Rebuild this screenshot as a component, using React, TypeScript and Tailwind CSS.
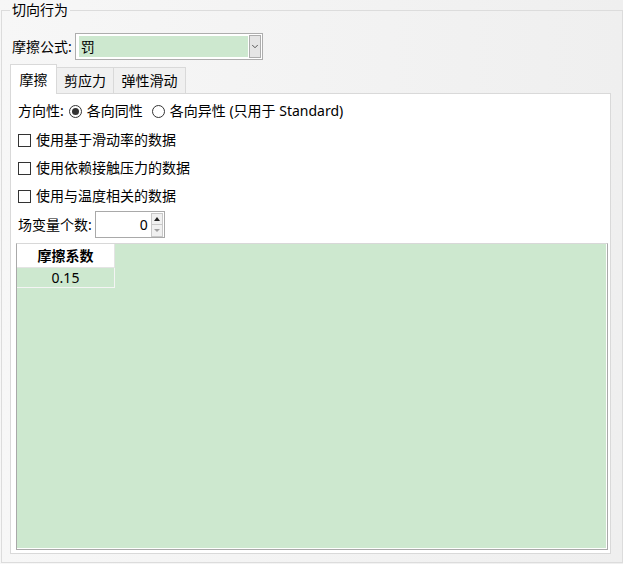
import { ChevronDown } from 'lucide-react'

const FONT = { fontFamily: '"Noto Sans", "Noto Sans CJK SC", sans-serif' }

function Radio({ checked, label }: { checked?: boolean; label: string }) {
  return (
    <label className="flex items-center gap-[5px]">
      <span className="flex h-[13px] w-[13px] items-center justify-center rounded-full border border-[#333333] bg-white">
        {checked && <span className="h-[7px] w-[7px] rounded-full bg-[#333333]" />}
      </span>
      <span>{label}</span>
    </label>
  )
}

function Check({ label }: { label: string }) {
  return (
    <div className="flex h-[28px] items-center gap-[5px]">
      <span className="h-[13px] w-[13px] border border-[#333333] bg-white" />
      <span>{label}</span>
    </div>
  )
}

export default function App() {
  return (
    <div
      className="h-[564px] w-[623px] overflow-hidden bg-gradient-to-r from-[#f7f7f7] to-[#efefef] text-[14px] leading-[20px] text-black"
      style={FONT}
    >
      <fieldset className="ml-[1px] h-[563px] w-[622px] border border-[#dcdcdc]">
        <legend className="ml-[8px] px-[2px] leading-[20px]">切向行为</legend>

        {/* Formula row */}
        <div className="mt-[13px] flex h-[27px] items-center pl-[10px]">
          <span>摩擦公式:</span>
          <div className="ml-[3px] flex h-[27px] w-[188px] items-center border border-[#adadad] bg-white p-[1px]">
            <div className="ml-[2px] flex h-[21px] w-[169px] items-center bg-[#cde8cf] pl-[2px]">罚</div>
            <div className="ml-[1px] flex h-[23px] w-[12px] items-center justify-center border border-[#adadad] bg-[#e5e5e5]">
              <ChevronDown className="h-[11px] w-[11px] text-[#222222]" strokeWidth={1.75} />
            </div>
          </div>
        </div>

        {/* Tabs */}
        <div className="ml-[8px] mt-[4px] flex items-end">
          <div className="relative z-10 -mb-[1px] flex h-[30px] w-[47px] items-center justify-center border border-b-0 border-[#d9d9d9] bg-white">
            摩擦
          </div>
          <div className="flex h-[26px] w-[57px] items-center justify-center border-r border-t border-[#d9d9d9] bg-[#f0f0f0]">
            剪应力
          </div>
          <div className="flex h-[26px] w-[72px] items-center justify-center border-r border-t border-[#d9d9d9] bg-[#f0f0f0]">
            弹性滑动
          </div>
        </div>

        {/* Panel */}
        <div className="ml-[8px] h-[461px] w-[601px] border border-[#d9d9d9] bg-white pl-[7px] pt-[7px]">
          <div className="flex h-[20px] items-center">
            <span className="mr-[5px]">方向性:</span>
            <Radio checked label="各向同性" />
            <span className="w-[9px]" />
            <Radio label="各向异性 (只用于 Standard)" />
          </div>
          <div className="mt-[5px]">
            <Check label="使用基于滑动率的数据" />
            <Check label="使用依赖接触压力的数据" />
            <Check label="使用与温度相关的数据" />
          </div>

          <div className="mt-[1px] flex h-[27px] items-center">
            <span>场变量个数:</span>
            <div className="ml-[3px] flex h-[27px] w-[70px] items-center border border-[#a9a9a9] bg-white">
              <span className="flex-1 pr-[3px] text-right">0</span>
              <div className="mr-[1px] flex flex-col">
                <div className="flex h-[12px] w-[12px] items-center justify-center border border-[#c8c8c8] bg-[#f0f0f0]">
                  <span className="h-0 w-0 border-x-[3px] border-b-[4px] border-x-transparent border-b-[#222222]" />
                </div>
                <div className="flex h-[12px] w-[12px] items-center justify-center border border-t-0 border-[#c8c8c8] bg-[#f0f0f0]">
                  <span className="h-0 w-0 border-x-[3px] border-t-[3px] border-x-transparent border-t-[#a0a0a0]" />
                </div>
              </div>
            </div>
          </div>

          {/* Table */}
          <div className="-ml-[2px] mt-[5px] h-[307px] w-[592px] border border-[#a9a9a9] border-t-[#d8d8d8] bg-white pb-[1px] pr-[1px]">
            <div className="h-full w-full bg-[#cde8cf]">
              <div className="flex h-[24px] w-[98px] items-center justify-center border-b border-r border-[#e4e4e4] bg-white font-bold">
                摩擦系数
              </div>
              <div className="flex h-[20px] w-[98px] items-center justify-center border-b border-r border-[#f4f4f4]">
                0.15
              </div>
            </div>
          </div>
        </div>
      </fieldset>
    </div>
  )
}
